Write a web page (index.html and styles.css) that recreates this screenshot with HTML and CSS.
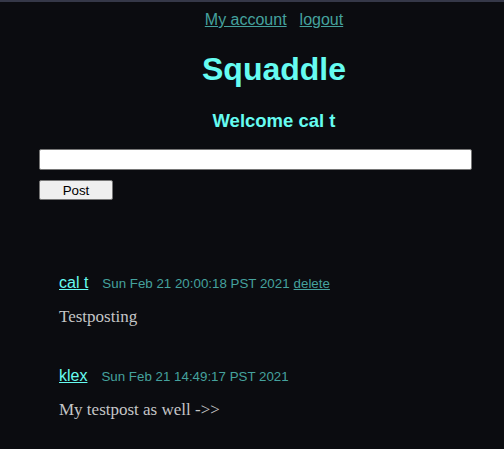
FILE: index.html
```html
<!DOCTYPE html>
<html>
<head>
<meta charset="utf-8">
<link rel="stylesheet" href="styles.css">
</head>
<body>
<div class="topbar"></div>
<header class="head">
  <nav class="nav">
    <a href="#">My account</a>
    <a href="#">logout</a>
  </nav>
  <h1 class="title">Squaddle</h1>
  <h2 class="welcome">Welcome cal t</h2>
</header>
<form class="form">
  <input class="input" type="text">
  <button class="btn" type="button">Post</button>
</form>
<div class="posts">
  <div class="post">
    <div class="meta">
      <a class="user" href="#">cal t</a>
      <span class="date">Sun Feb 21 20:00:18 PST 2021</span>
      <a class="del" href="#">delete</a>
    </div>
    <p class="text">Testposting</p>
  </div>
  <div class="post">
    <div class="meta">
      <a class="user" href="#">klex</a>
      <span class="date">Sun Feb 21 14:49:17 PST 2021</span>
    </div>
    <p class="text">My testpost as well -&gt;&gt;</p>
  </div>
</div>
</body>
</html>
```
FILE: styles.css
```css
html, body {
  margin: 0;
  padding: 0;
  background: #0b0c10;
  font-family: "Liberation Sans", Arial, sans-serif;
}
.topbar {
  height: 2px;
  background: #353848;
}
.head {
  padding-left: 44px;
}
.nav {
  display: flex;
  justify-content: center;
  gap: 13px;
  padding-top: 9px;
  font-size: 16px;
  line-height: 18px;
}
.nav a {
  color: #45a29e;
}
.title {
  margin: 21px 0 0;
  text-align: center;
  font-size: 32px;
  line-height: 38px;
  color: #66fcf1;
  font-weight: bold;
}
.welcome {
  margin: 22px 0 0;
  text-align: center;
  font-size: 18.5px;
  line-height: 22px;
  color: #66fcf1;
}
.form {
  margin: 17px 0 0 39px;
  display: flex;
  flex-direction: column;
  align-items: flex-start;
  gap: 10px;
}
.input {
  box-sizing: border-box;
  width: 433px;
  height: 21px;
  margin: 0;
  border: 1px solid #767676;
  border-radius: 2px;
  background: #fff;
}
.btn {
  box-sizing: border-box;
  width: 74px;
  height: 20px;
  margin: 0;
  padding: 0;
  border: 1px solid #767676;
  border-radius: 2px;
  background: #efefef;
  font-family: "Liberation Sans", Arial, sans-serif;
  font-size: 13.33px;
  color: #000;
}
.posts {
  margin: 74px 0 0 59px;
}
.post {
  margin-bottom: 40px;
}
.meta {
  display: flex;
  align-items: baseline;
  font-size: 13.33px;
}
.user {
  color: #66fcf1;
  font-size: 16px;
  margin-right: 14px;
}
.date {
  color: #45a29e;
  margin-right: 4px;
}
.del {
  color: #45a29e;
}
.text {
  margin: 15px 0 0;
  font-family: "Liberation Serif", Georgia, serif;
  font-size: 17px;
  color: #c5c6c7;
}
```
